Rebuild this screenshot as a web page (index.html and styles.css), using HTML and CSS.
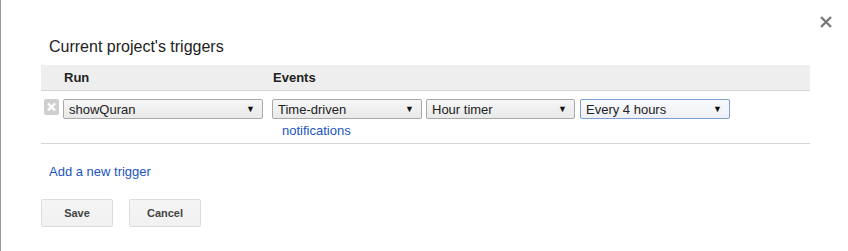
FILE: index.html
```html
<!DOCTYPE html>
<html>
<head>
<meta charset="utf-8">
<link rel="stylesheet" href="styles.css">
</head>
<body>
<div class="dialog">
  <button class="close" aria-label="Close">
    <svg width="12" height="12" viewBox="0 0 12 12"><path d="M1 1 L11 11 M11 1 L1 11" stroke="#7a7a7a" stroke-width="2.4" fill="none"/></svg>
  </button>
  <h2 class="title">Current project's triggers</h2>
  <div class="table">
    <div class="head">
      <div></div>
      <div class="hcell">Run</div>
      <div class="hcell">Events</div>
    </div>
    <div class="row">
      <div class="del-cell">
        <span class="del">
          <svg width="15" height="16" viewBox="0 0 15 16"><path d="M4 4.5 L11 11.5 M11 4.5 L4 11.5" stroke="#fff" stroke-width="2.4" fill="none"/></svg>
        </span>
      </div>
      <div class="run-cell">
        <div class="sel w200"><span>showQuran</span><i>▼</i></div>
      </div>
      <div class="ev-cell">
        <div class="sels">
          <div class="sel w150"><span>Time-driven</span><i>▼</i></div>
          <div class="sel w149 gap4"><span>Hour timer</span><i>▼</i></div>
          <div class="sel w150 gap5 focus"><span>Every 4 hours</span><i>▼</i></div>
        </div>
        <a class="link notif" href="#">notifications</a>
      </div>
    </div>
  </div>
  <a class="link add" href="#">Add a new trigger</a>
  <div class="buttons">
    <button class="btn">Save</button>
    <button class="btn">Cancel</button>
  </div>
</div>
</body>
</html>
```
FILE: styles.css
```css
html, body {
  margin: 0;
  padding: 0;
  background: #fff;
}
body {
  font-family: "Liberation Sans", Arial, sans-serif;
  color: #222;
}
.dialog {
  position: relative;
  height: 251px;
  box-sizing: border-box;
  border-left: 1px solid #9a9a9a;
  padding: 37px 38px 0 40px;
}
.close {
  position: absolute;
  top: 16px;
  left: 819px;
  width: 12px;
  height: 12px;
  padding: 0;
  border: 0;
  background: none;
  display: block;
}
.close svg { display: block; }
.title {
  margin: 0 0 0 8px;
  font-size: 16px;
  line-height: 20px;
  font-weight: normal;
  color: #222;
}
.table {
  margin-top: 8px;
}
.head {
  display: grid;
  grid-template-columns: 22px 209px 1fr;
  height: 25px;
  background: #eeeeee;
  border-bottom: 1px solid #d6d6d6;
}
.hcell {
  font-size: 13px;
  font-weight: bold;
  line-height: 25px;
  padding-left: 1px;
  color: #222;
}
.row {
  display: grid;
  grid-template-columns: 22px 209px 1fr;
  padding: 8px 0 4px;
  border-bottom: 1px solid #d6d6d6;
}
.del-cell {
  padding-left: 3px;
}
.del {
  display: block;
  width: 15px;
  height: 16px;
  background: #cfcfcf;
  border-radius: 2px;
}
.del svg { display: block; }
.sels {
  display: flex;
}
.sel {
  box-sizing: border-box;
  height: 20px;
  border: 1px solid #a9a9a9;
  border-radius: 2px;
  background: linear-gradient(#f6f6f6, #e9e9e9);
  display: flex;
  align-items: center;
  justify-content: space-between;
  padding: 0 7px 0 5px;
  font-size: 13px;
  color: #222;
}
.sel i {
  font-style: normal;
  font-size: 9px;
  color: #111;
}
.w200 { width: 200px; }
.w150 { width: 150px; }
.w149 { width: 149px; }
.gap4 { margin-left: 4px; }
.gap5 { margin-left: 5px; }
.sel.focus {
  border-color: #7b9fd4;
  background: linear-gradient(#f9fafc, #eef0f4);
}
.link {
  color: #1a55c0;
  text-decoration: none;
  font-size: 13px;
  line-height: 16px;
}
.notif {
  display: block;
  margin: 4px 0 0 10px;
}
.add {
  display: block;
  margin: 20px 0 0 8px;
}
.buttons {
  display: flex;
  gap: 16px;
  margin-top: 19px;
}
.btn {
  width: 72px;
  height: 28px;
  box-sizing: border-box;
  border: 1px solid #dcdcdc;
  border-radius: 2px;
  background: linear-gradient(#f5f5f5, #f1f1f1);
  font-family: "Liberation Sans", Arial, sans-serif;
  font-size: 11px;
  font-weight: bold;
  color: #444;
  padding: 0;
}
```
